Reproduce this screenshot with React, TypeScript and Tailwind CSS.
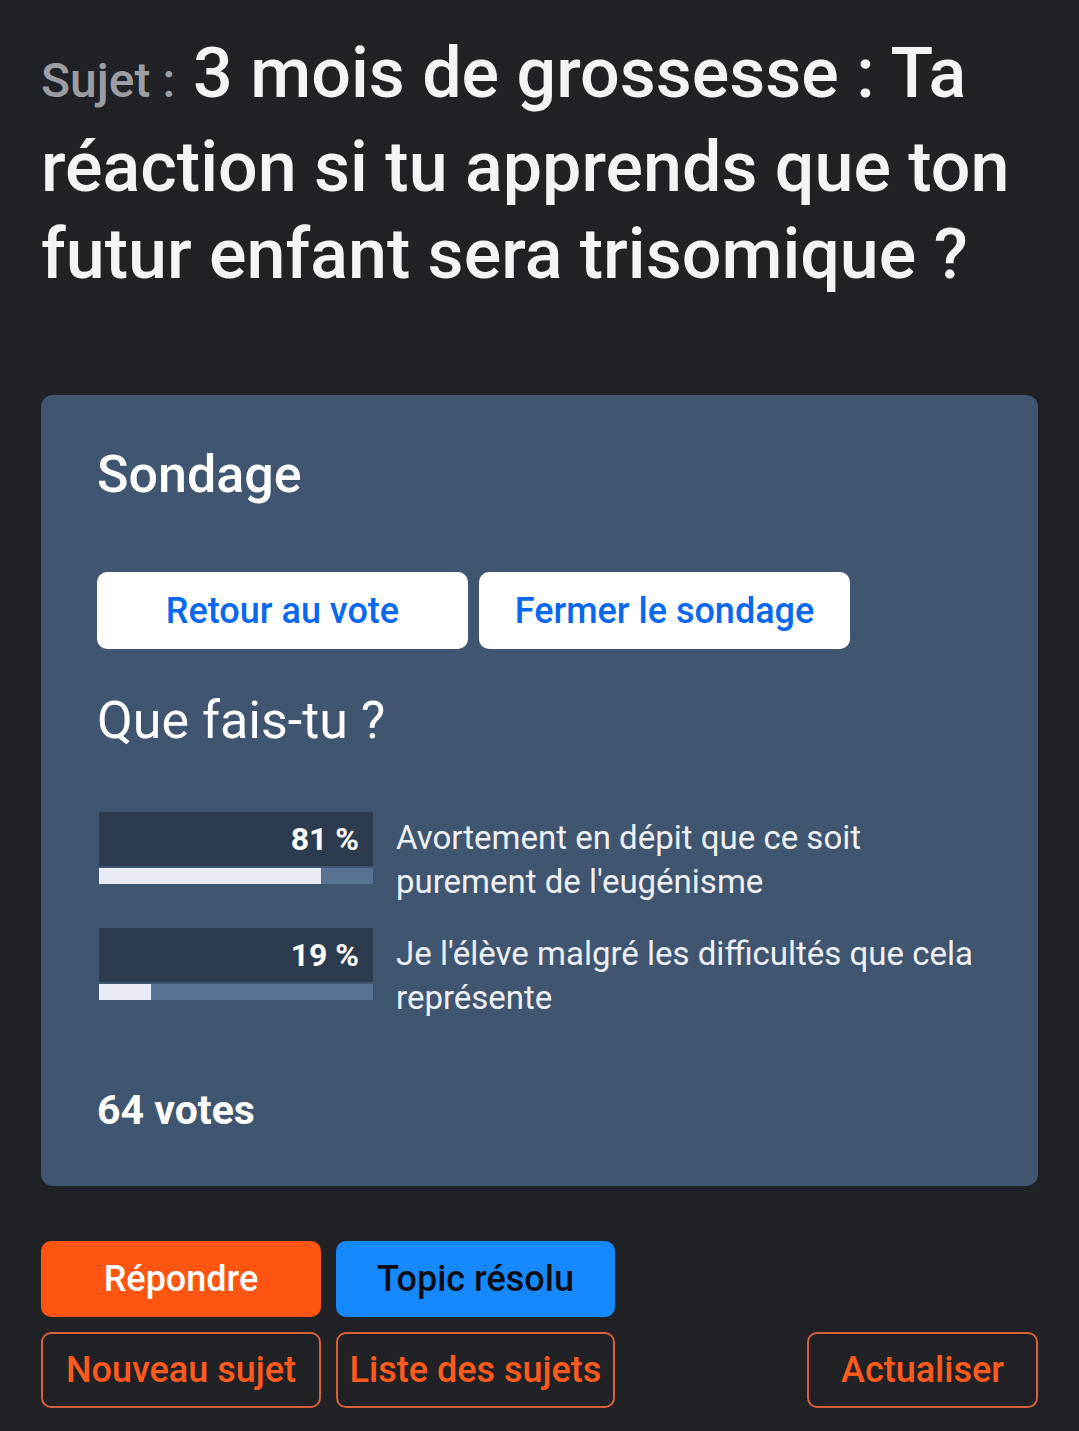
export default function App() {
  return (
    <div className="min-h-[1431px] w-full bg-[#202226] px-[41px] pt-[30px] font-['Roboto',sans-serif]">
      <h1 className="text-[70px] font-medium leading-[87px] text-[#f4f4f6]">
        <span className="mr-[6px] text-[48px] text-[#9c9ea3]">Sujet : </span>
        3 mois de grossesse : Ta réaction si tu apprends que ton futur enfant sera trisomique ?
      </h1>

      <div className="mt-[97px] rounded-[12px] bg-[#405570] px-[56px] pb-[54px] pt-[48px]">
        <h2 className="text-[52px] font-medium leading-[64px] text-white">Sondage</h2>

        <div className="mt-[65px] flex gap-[11px]">
          <button className="h-[77px] w-[371px] rounded-[10px] bg-white text-[36px] font-medium text-[#0868ee]">
            Retour au vote
          </button>
          <button className="h-[77px] w-[371px] rounded-[10px] bg-white text-[36px] font-medium text-[#0868ee]">
            Fermer le sondage
          </button>
        </div>

        <h3 className="mt-[40px] text-[52px] leading-[64px] text-white">Que fais-tu ?</h3>

        <div className="mt-[59px] flex flex-col gap-[24px]">
          <PollRow pct={81} label="Avortement en dépit que ce soit purement de l'eugénisme" />
          <PollRow pct={19} label="Je l'élève malgré les difficultés que cela représente" />
        </div>

        <div className="mt-[68px] text-[41px] font-bold leading-[44px] text-white">64 votes</div>
      </div>

      <div className="mt-[55px] flex flex-col gap-[15px]">
        <div className="flex gap-[15px]">
          <button className="h-[76px] w-[280px] rounded-[10px] bg-[#ff5512] text-[36px] font-medium text-white">
            Répondre
          </button>
          <button className="h-[76px] w-[279px] rounded-[10px] bg-[#1689ff] text-[36px] font-medium text-[#0b0d12]">
            Topic résolu
          </button>
        </div>
        <div className="flex gap-[15px]">
          <OutlineButton className="w-[280px]">Nouveau sujet</OutlineButton>
          <OutlineButton className="w-[279px]">Liste des sujets</OutlineButton>
          <OutlineButton className="ml-auto w-[231px]">Actualiser</OutlineButton>
        </div>
      </div>
    </div>
  )
}

function PollRow({ pct, label }: { pct: number; label: string }) {
  return (
    <div className="flex items-start gap-[23px]">
      <div className="ml-[2px] w-[274px] shrink-0">
        <div className="flex h-[54px] items-center justify-end bg-[#2c3b4e] pr-[14px] text-[32px] font-bold text-white">
          {pct} %
        </div>
        <div className="mt-[2px] h-[16px] bg-[#587294]">
          <div className="h-full bg-[#e9ebf6]" style={{ width: `${pct}%` }} />
        </div>
      </div>
      <p className="pt-[4px] text-[33px] leading-[44px] text-[#eef0f4]">{label}</p>
    </div>
  )
}

function OutlineButton({ className, children }: { className: string; children: React.ReactNode }) {
  return (
    <button
      className={`h-[76px] rounded-[10px] border-2 border-[#d9613a] text-[36px] font-medium text-[#ff5a1e] ${className}`}
    >
      {children}
    </button>
  )
}
